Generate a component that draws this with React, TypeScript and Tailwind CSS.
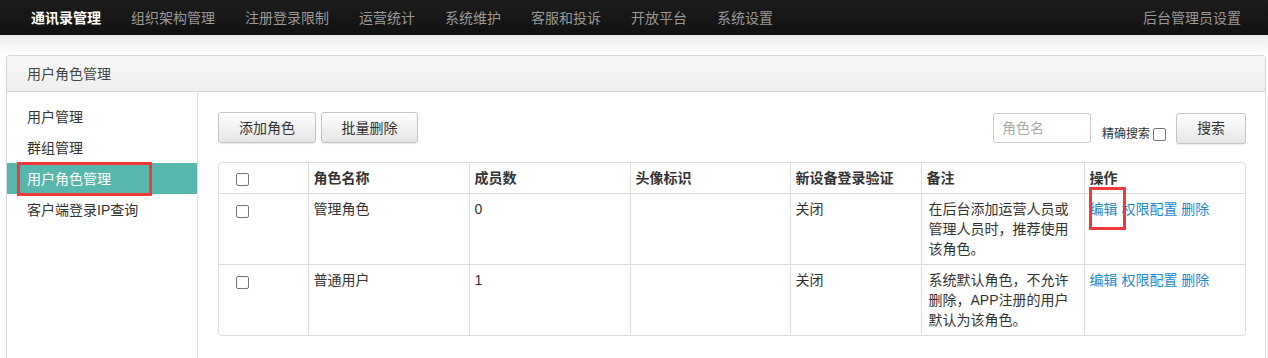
import React from "react";

const navItems = ["组织架构管理", "注册登录限制", "运营统计", "系统维护", "客服和投诉", "开放平台", "系统设置"];

const sideItems = ["用户管理", "群组管理", "用户角色管理", "客户端登录IP查询"];

const rows = [
  { name: "管理角色", count: "0", verify: "关闭", note: "在后台添加运营人员或管理人员时，推荐使用该角色。" },
  { name: "普通用户", count: "1", verify: "关闭", note: "系统默认角色，不允许删除，APP注册的用户默认为该角色。" },
];

const cols = ["w-[89px]", "w-[161px]", "w-[161px]", "w-[160px]", "w-[131px]", "w-[163px]", "w-[162px]"];

function Box() {
  return <span className="inline-block h-[13px] w-[13px] rounded-[2px] border border-[#767676] bg-white align-middle" />;
}

function Btn({ label, w }: { label: string; w: string }) {
  return (
    <button
      type="button"
      className={`h-[31px] ${w} rounded-[3px] border border-[#c4c4c4] bg-gradient-to-b from-[#fefefe] to-[#e6e6e6] text-[14px] text-[#333] shadow-[0_1px_1px_rgba(0,0,0,0.08)]`}
    >
      {label}
    </button>
  );
}

export default function App() {
  return (
    <div className="h-[358px] overflow-hidden bg-white font-['Liberation_Sans','Noto_Sans_CJK_SC',sans-serif] text-[14px] leading-[20px] text-[#333]">
      <nav className="flex h-[35px] items-center bg-gradient-to-b from-[#1c1c1c] to-[#111] pl-4 pr-[27px]">
        <span className="px-[15px] font-bold text-white">通讯录管理</span>
        {navItems.map((t) => (
          <span key={t} className="px-[15px] text-[#999]">
            {t}
          </span>
        ))}
        <span className="ml-auto text-[#999]">后台管理员设置</span>
      </nav>
      <div className="h-[20px] bg-gradient-to-b from-[#ececec] to-white" />

      <div className="ml-[6px] mr-[2px] rounded-t-[3px] border border-[#d6d6d6]">
        <div className="flex h-[36px] items-center border-b border-[#d6d6d6] bg-gradient-to-b from-[#f8f8f8] to-[#efefef] pl-[20px] text-[#444]">
          用户角色管理
        </div>
        <div className="flex">
          <aside className="h-[300px] w-[191px] shrink-0 border-r border-[#ddd] pt-[9px]">
            {sideItems.map((t, i) => (
              <div
                key={t}
                className={`relative flex h-[31px] items-center pl-[20px] ${i === 2 ? "bg-[#58b7ad] text-white" : "text-[#333]"}`}
              >
                {t}
                {i === 2 && (
                  <span className="absolute left-[10px] top-[-1px] h-[34px] w-[135px] border-[3px] border-[#f03a3a]" />
                )}
              </div>
            ))}
          </aside>

          <main className="flex-1 pl-[20px] pt-[20px]">
            <div className="flex items-start">
              <Btn label="添加角色" w="w-[98px]" />
              <div className="w-[5px]" />
              <Btn label="批量删除" w="w-[97px]" />
              <div className="ml-auto flex items-center">
                <input
                  placeholder="角色名"
                  className="h-[30px] w-[98px] rounded-[3px] border border-[#ccc] px-[8px] text-[14px] placeholder:text-[#aaa]"
                />
                <span className="ml-[11px] mt-[12px] flex items-center text-[12px]">
                  精确搜索
                  <span className="ml-[3px]">
                    <Box />
                  </span>
                </span>
                <div className="ml-[10px]">
                  <Btn label="搜索" w="w-[70px]" />
                </div>
              </div>
              <div className="w-[19px] shrink-0" />
            </div>

            <div className="mt-[18px] w-[1028px] overflow-hidden rounded-[4px] border border-[#ddd]">
              <table className="w-full table-fixed border-collapse">
                <colgroup>
                  {cols.map((c, i) => (
                    <col key={i} className={c} />
                  ))}
                </colgroup>
                <thead>
                  <tr className="border-b border-[#ddd]">
                    <th className="h-[30px] pl-[17px] text-left">
                      <Box />
                    </th>
                    {["角色名称", "成员数", "头像标识", "新设备登录验证", "备注", "操作"].map((h) => (
                      <th key={h} className="border-l border-[#ddd] px-[5px] py-[5px] text-left font-bold">
                        {h}
                      </th>
                    ))}
                  </tr>
                </thead>
                <tbody>
                  {rows.map((r, i) => (
                    <tr key={r.name} className={i === 0 ? "border-b border-[#ddd]" : ""}>
                      <td className="pl-[17px] pt-[6px] text-left align-top">
                        <Box />
                      </td>
                      <td className="border-l border-[#ddd] px-[5px] py-[5px] align-top">{r.name}</td>
                      <td className="border-l border-[#ddd] px-[5px] py-[5px] align-top">{r.count}</td>
                      <td className="border-l border-[#ddd] px-[5px] py-[5px] align-top" />
                      <td className="border-l border-[#ddd] px-[5px] py-[5px] align-top">{r.verify}</td>
                      <td className="border-l border-[#ddd] py-[5px] pl-[7px] pr-[8px] align-top">{r.note}</td>
                      <td className="relative border-l border-[#ddd] px-[5px] py-[5px] align-top text-[#1a8ad0]">
                        编辑 权限配置 删除
                        {i === 0 && (
                          <span className="absolute left-[4px] top-[-7px] h-[43px] w-[37px] border-[3px] border-[#f03a3a]" />
                        )}
                      </td>
                    </tr>
                  ))}
                </tbody>
              </table>
            </div>
          </main>
        </div>
      </div>
    </div>
  );
}
